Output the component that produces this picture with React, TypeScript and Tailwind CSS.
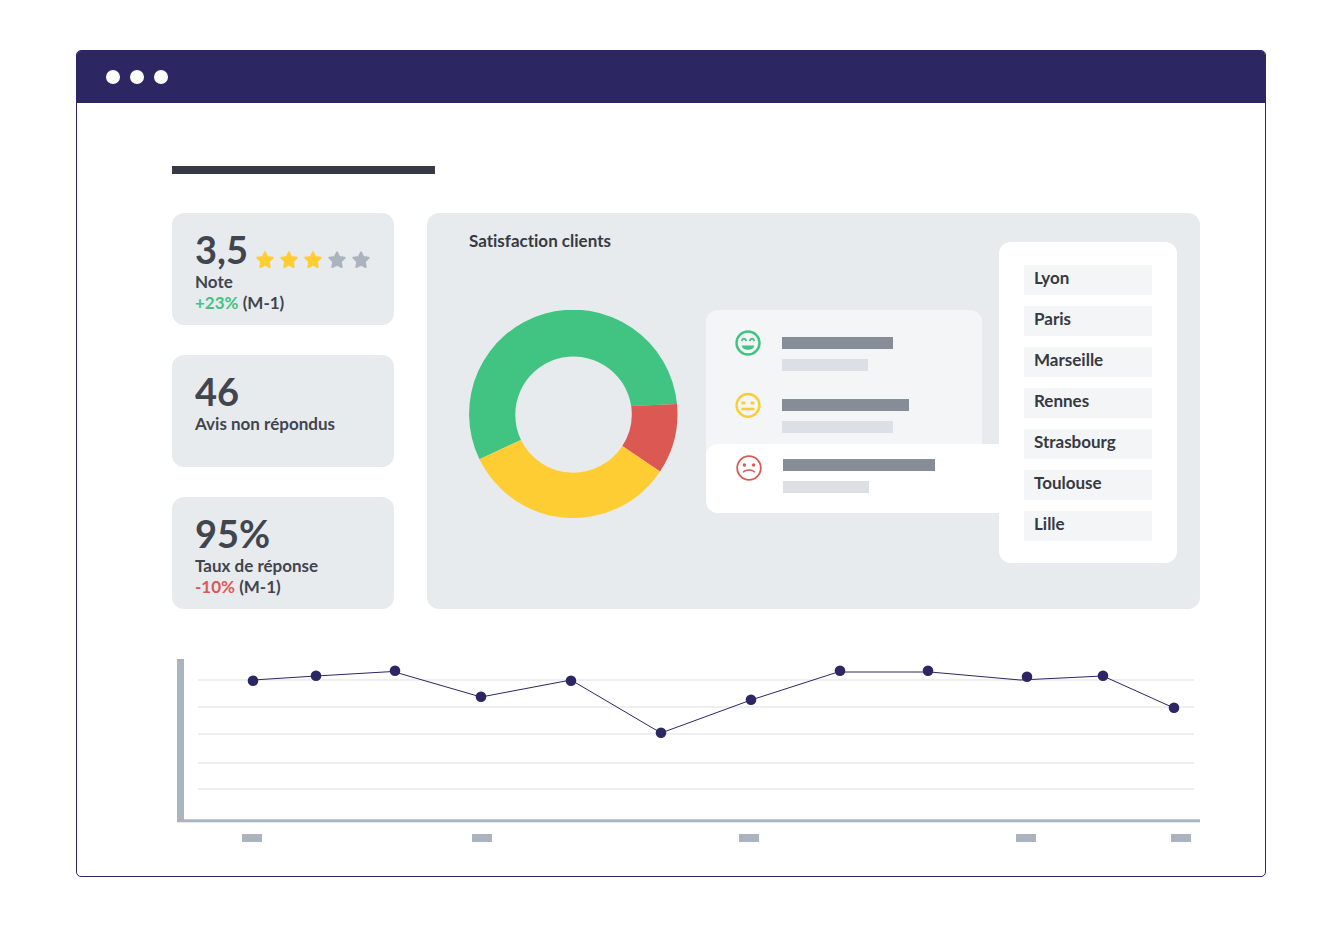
interface Stat {
  value: string;
  label: string;
  rating?: number;
  change?: string;
  changeColor?: string;
}

interface Review {
  mood: "happy" | "neutral" | "sad";
  title: string;
  text: string;
}

const stats: Stat[] = [
  { value: "3,5", label: "Note", rating: 3, change: "+23%", changeColor: "text-[#41c482]" },
  { value: "46", label: "Avis non répondus" },
  { value: "95%", label: "Taux de réponse", change: "-10%", changeColor: "text-[#db5853]" },
];

const reviews: Review[] = [
  { mood: "happy", title: "w-[111px]", text: "w-[86px]" },
  { mood: "neutral", title: "w-[127px]", text: "w-[111px]" },
];

const cities = ["Lyon", "Paris", "Marseille", "Rennes", "Strasbourg", "Toulouse", "Lille"];

const gridLines = [21, 48, 75, 104, 130];

const points = [
  [76, 22],
  [139, 17],
  [218, 12],
  [304, 38],
  [394, 22],
  [484, 74],
  [574, 41],
  [663, 12],
  [751, 12],
  [850, 18],
  [926, 17],
  [997, 49],
];

const ticks = [65, 295, 562, 839, 994];

const Star = ({ filled }: { filled: boolean }) => (
  <svg viewBox="0 0 18 18" className={filled ? "size-[18px] text-[#fecc33]" : "size-[18px] text-[#abb4be]"}>
    <path
      d="M9 1.4 L11.3 6.1 L16.6 6.8 L12.8 10.6 L13.7 16 L9 13.6 L4.3 16 L5.2 10.6 L1.4 6.8 L6.7 6.1 Z"
      fill="currentColor"
      stroke="currentColor"
      strokeWidth="2"
      strokeLinejoin="round"
    />
  </svg>
);

const StatCard = ({ value, label, rating, change, changeColor }: Stat) => (
  <div className="h-28 rounded-xl bg-[#e7ebee] px-[23px] pt-4">
    <div className="flex items-end gap-2">
      <p className="text-[38px] leading-10">{value}</p>
      {rating !== undefined && (
        <div className="flex gap-1.5">
          {[1, 2, 3, 4, 5].map((n) => (
            <Star key={n} filled={n <= rating} />
          ))}
        </div>
      )}
    </div>
    <p className="mt-0.5">{label}</p>
    {change && (
      <p>
        <span className={changeColor}>{change}</span> (M-1)
      </p>
    )}
  </div>
);

const Face = ({ mood }: { mood: Review["mood"] }) => {
  if (mood === "happy") {
    return (
      <svg viewBox="0 0 26 26" className="size-[26px] shrink-0" fill="none" stroke="#41c482">
        <circle cx="13" cy="13" r="11.5" strokeWidth="2.4" />
        <path d="M6.8 11.2 C7.2 7.8 10.6 7.8 11.2 11.2 M14.8 11.2 C15.4 7.8 18.8 7.8 19.2 11.2" strokeWidth="1.7" />
        <path d="M6.8 15.4 H19.2 C18.6 21.2 7.4 21.2 6.8 15.4 Z" fill="#41c482" stroke="none" />
      </svg>
    );
  }
  if (mood === "neutral") {
    return (
      <svg viewBox="0 0 26 26" className="size-[26px] shrink-0" fill="none" stroke="#fecc33">
        <circle cx="13" cy="13.4" r="11.4" strokeWidth="2.4" />
        <rect x="6.4" y="9.6" width="4" height="3" rx="1" fill="#fecc33" stroke="none" />
        <rect x="15.4" y="9.6" width="4" height="3" rx="1" fill="#fecc33" stroke="none" />
        <path d="M7.4 17 H18.4" strokeWidth="2.4" strokeLinecap="round" />
      </svg>
    );
  }
  return (
    <svg viewBox="0 0 26 26" className="size-[26px] shrink-0" fill="none" stroke="#db5853">
      <circle cx="13" cy="13" r="11.8" strokeWidth="1.8" />
      <circle cx="8.4" cy="10" r="1.7" fill="#db5853" stroke="none" />
      <circle cx="17.6" cy="10" r="1.7" fill="#db5853" stroke="none" />
      <path d="M7.2 17.4 C9.4 14.2 16.6 14.2 18.8 17.4" strokeWidth="1.5" />
    </svg>
  );
};

const Donut = () => (
  <svg viewBox="0 0 209 209" className="size-[209px] shrink-0">
    <path d="M208 94 A104.2 104.2 0 1 0 10.5 149.3 L52 130 A58.3 58.3 0 1 1 162.2 96 Z" fill="#41c482" />
    <path d="M208 94 A104.2 104.2 0 0 1 191 161.6 L153.3 136 A58.3 58.3 0 0 0 162.2 96 Z" fill="#db5853" />
    <path d="M191 161.6 A104.2 104.2 0 0 1 10.5 149.3 L52 130 A58.3 58.3 0 0 0 153.3 136 Z" fill="#fecc33" />
  </svg>
);

const Reviews = () => (
  <div className="mr-[17px] flex-1 rounded-xl bg-[#f3f5f7]">
    <div className="flex flex-col gap-[21px] px-[29px] pt-5 pb-[11px]">
      {reviews.map((item) => (
        <div key={item.mood} className="flex gap-[21px]">
          <Face mood={item.mood} />
          <div className="flex flex-col gap-2.5 pt-[7px]">
            <div className={`h-3 bg-[#868d96] ${item.title}`} />
            <div className={`h-3 bg-[#dcdfe4] ${item.text}`} />
          </div>
        </div>
      ))}
    </div>
    {/* selected review, joined to the list of cities */}
    <div className="-mr-[17px] flex gap-[21px] rounded-l-xl bg-white px-[30px] pt-[11px] pb-5">
      <Face mood="sad" />
      <div className="flex flex-col gap-2.5 pt-1">
        <div className="h-3 w-[152px] bg-[#868d96]" />
        <div className="h-3 w-[86px] bg-[#dcdfe4]" />
      </div>
    </div>
  </div>
);

const Chart = () => (
  <svg viewBox="0 0 1023 183" className="w-full">
    {gridLines.map((y) => (
      <path key={y} d={`M21 ${y} H1017`} stroke="#e7eaee" strokeWidth="1.5" />
    ))}
    <rect x="0" y="0" width="7" height="163" fill="#abb4be" />
    <rect x="0" y="160.3" width="1023" height="3" fill="#abb4be" />
    <path
      d="M76 21 L139 17 L216 12.5 L304 38 L394 21 L484 74 L574 41 L661 13 H753 L843 21 L926 17 L997 49"
      fill="none"
      stroke="#2c2663"
      strokeWidth="1"
    />
    {points.map(([x, y]) => (
      <circle key={x} cx={x} cy={y - 0.3} r="5.3" fill="#2c2663" />
    ))}
    {ticks.map((x) => (
      <rect key={x} x={x} y="175" width="20" height="8" fill="#abb4be" />
    ))}
  </svg>
);

const App = () => {
  return (
    <div className="min-h-screen bg-white py-[50px] pr-[75px] pl-[76px] font-['Lato',sans-serif] text-[17px] leading-[21px] font-bold text-[#41454e] [font-variant-ligatures:none]">
      <div className="overflow-hidden rounded-[5px] border border-[#2c2663]">
        <header className="flex h-[52px] items-center gap-2.5 bg-[#2c2663] px-[29px]">
          <span className="size-3.5 rounded-full bg-white" />
          <span className="size-3.5 rounded-full bg-white" />
          <span className="size-3.5 rounded-full bg-white" />
        </header>

        <main className="pt-[63px] pr-[65px] pb-[34px] pl-[95px]">
          <div className="h-2 w-[263px] bg-[#363a42]" />

          <div className="mt-[39px] flex gap-[33px]">
            <div className="flex w-[222px] shrink-0 flex-col gap-[30px]">
              {stats.map((stat) => (
                <StatCard key={stat.label} {...stat} />
              ))}
            </div>

            <section className="flex flex-1 items-start rounded-xl bg-[#e7ebee] pr-[23px] pl-[42px] text-[#363a42]">
              <div className="flex-1 pt-[17px]">
                <h2>Satisfaction clients</h2>
                <div className="mt-[59px] flex items-start gap-7">
                  <Donut />
                  <Reviews />
                </div>
              </div>
              <ul className="mt-[29px] flex w-[178px] flex-col gap-[11px] rounded-xl bg-white px-[25px] pt-[23px] pb-[22px]">
                {cities.map((city) => (
                  <li key={city} className="h-[30px] bg-[#f3f5f7] px-2.5 pt-0.5">
                    {city}
                  </li>
                ))}
              </ul>
            </section>
          </div>

          <div className="mt-[50px] ml-[5px]">
            <Chart />
          </div>
        </main>
      </div>
    </div>
  );
};

export default App;
